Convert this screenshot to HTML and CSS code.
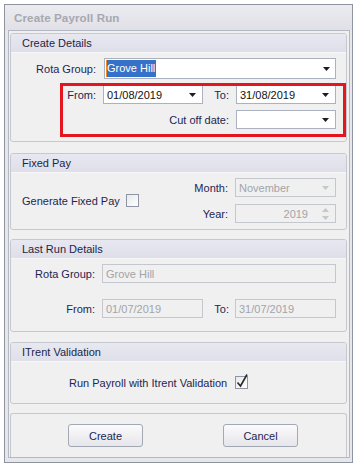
FILE: index.html
```html
<!DOCTYPE html>
<html>
<head>
<meta charset="utf-8">
<link rel="stylesheet" href="styles.css">
</head>
<body>
<div class="window">
  <div class="titlebar"><span class="title">Create Payroll Run</span></div>
  <div class="client">
    <section class="group g1">
      <div class="ghead">Create Details</div>
      <div class="gbody b1">
        <div class="row">
          <span class="lbl l93">Rota Group:</span>
          <div class="combo w232 h21"><span class="val"><span class="sel">Grove Hill</span></span><svg class="arrow" width="7" height="4" viewBox="0 0 7 4"><path d="M0 0h7L3.5 4z"/></svg></div>
        </div>
        <div class="row gap6">
          <span class="lbl l92">From:</span>
          <div class="combo w100"><span class="val">01/08/2019</span><svg class="arrow" width="7" height="4" viewBox="0 0 7 4"><path d="M0 0h7L3.5 4z"/></svg></div>
          <span class="lbl l33">To:</span>
          <div class="combo w100"><span class="val">31/08/2019</span><svg class="arrow" width="7" height="4" viewBox="0 0 7 4"><path d="M0 0h7L3.5 4z"/></svg></div>
        </div>
        <div class="row gap6 end">
          <span class="lbl pr7">Cut off date:</span>
          <div class="combo w100"><span class="val"></span><svg class="arrow" width="7" height="4" viewBox="0 0 7 4"><path d="M0 0h7L3.5 4z"/></svg></div>
        </div>
      </div>
      <div class="annot"></div>
    </section>

    <section class="group g2">
      <div class="ghead">Fixed Pay</div>
      <div class="gbody b2">
        <div class="gen">
          <span class="lbl">Generate Fixed Pay</span>
          <span class="check"></span>
        </div>
        <div class="rcol">
          <div class="row">
            <span class="lbl pr7">Month:</span>
            <div class="combo w101 dis"><span class="val">November</span><svg class="arrow" width="7" height="4" viewBox="0 0 7 4"><path d="M0 0h7L3.5 4z"/></svg></div>
          </div>
          <div class="row">
            <span class="lbl pr7">Year:</span>
            <div class="combo w101 dis"><span class="val right">2019</span>
              <span class="spin">
                <svg width="7" height="4" viewBox="0 0 7 4"><path d="M0 4h7L3.5 0z"/></svg>
                <svg width="7" height="4" viewBox="0 0 7 4"><path d="M0 0h7L3.5 4z"/></svg>
              </span>
            </div>
          </div>
        </div>
      </div>
    </section>

    <section class="group g3">
      <div class="ghead">Last Run Details</div>
      <div class="gbody b3">
        <div class="row">
          <span class="lbl l91">Rota Group:</span>
          <div class="combo w234 dis"><span class="val">Grove Hill</span></div>
        </div>
        <div class="row gap16">
          <span class="lbl l91">From:</span>
          <div class="combo w101 dis"><span class="val">01/07/2019</span></div>
          <span class="lbl l32">To:</span>
          <div class="combo w101 dis"><span class="val">31/07/2019</span></div>
        </div>
      </div>
    </section>

    <section class="group g4">
      <div class="ghead">ITrent Validation</div>
      <div class="gbody b4">
        <span class="lbl">Run Payroll with Itrent Validation</span>
        <span class="check on"><svg width="14" height="16" viewBox="0 0 14 16"><path d="M2.5 9.5L5.5 13L12 1.5" fill="none" stroke="#2a2a2a" stroke-width="1.6"/></svg></span>
      </div>
    </section>

    <div class="panel">
      <button class="btn">Create</button>
      <button class="btn">Cancel</button>
    </div>
  </div>
</div>
</body>
</html>
```

FILE: styles.css
```css
html, body {
  margin: 0;
  padding: 0;
  background: #ffffff;
}
body {
  font-family: "Liberation Sans", Arial, sans-serif;
  font-size: 11px;
  color: #1e2550;
}
.window {
  margin: 4px 0 0 4px;
  width: 349px;
  height: 459px;
  box-sizing: border-box;
  border: 1px solid #8e939e;
  background: #e6e6eb;
  padding: 0 2px 4px 3px;
  display: flex;
  flex-direction: column;
}
.titlebar {
  height: 25px;
  display: flex;
  align-items: center;
  background: linear-gradient(#ebebf0, #e0e0e6);
  margin: 0 -2px 0 -3px;
  padding-left: 9px;
}
.title {
  font-weight: bold;
  font-size: 11.6px;
  color: #a6a8b0;
  letter-spacing: 0.1px;
}
.client {
  flex: 1;
  border: 1px solid #b4b8c2;
  background: #f0f0f0;
  padding: 2px 2px 0 1px;
  display: flex;
  flex-direction: column;
}
.group {
  position: relative;
  width: 337px;
  box-sizing: border-box;
  border: 1px solid #c6c8d0;
  border-radius: 3px;
  background: #f0f0f0;
}
.g2 { margin-top: 11px; }
.g3 { margin-top: 9px; }
.g4 { margin-top: 10px; }
.ghead {
  height: 19px;
  box-sizing: border-box;
  padding-left: 11px;
  display: flex;
  align-items: center;
  background: linear-gradient(#e8e8f1, #dfdfe9);
  border-bottom: 1px solid #f7f7fa;
  border-radius: 2px 2px 0 0;
  color: #1b2548;
}
.gbody {
  padding-right: 10px;
}
.b1 { padding-top: 5px; padding-bottom: 12px; display: flex; flex-direction: column; gap: 6px; }
.b2 { padding: 5px 10px 6px 11px; display: flex; align-items: center; }
.b3 { padding-top: 5px; padding-bottom: 13px; display: flex; flex-direction: column; }
.b4 { padding: 14px 0 14px 58px; display: flex; align-items: center; height: 13px; }
.row {
  display: flex;
  align-items: center;
}
.gap16 { margin-top: 16px; }
.end { justify-content: flex-end; }
.lbl {
  box-sizing: border-box;
  text-align: right;
  white-space: nowrap;
}
.l93 { width: 93px; padding-right: 8px; }
.l92 { width: 92px; padding-right: 7px; }
.l91 { width: 91px; padding-right: 7px; }
.l33 { width: 33px; padding-right: 7px; }
.l32 { width: 32px; padding-right: 6px; }
.pr7 { padding-right: 7px; }
.combo {
  box-sizing: border-box;
  height: 19px;
  border: 1px solid #abb1be;
  background: #ffffff;
  display: flex;
  align-items: center;
  padding-left: 3px;
  color: #111111;
}
.h21 { height: 21px; padding-left: 1px; }
.w232 { width: 232px; }
.w234 { width: 234px; }
.w100 { width: 100px; }
.w101 { width: 101px; }
.val {
  flex: 1;
  white-space: nowrap;
}
.val.right { text-align: right; padding-right: 14px; }
.sel {
  display: inline-block;
  background: #3671c9;
  color: #ffffff;
  border-left: 1px solid #f08a24;
  padding: 1px 1px 1px 0;
  line-height: 15px;
}
.arrow {
  margin-right: 6px;
  fill: #1c1c24;
  flex: none;
}
.h21 .arrow { margin-right: 5px; }
.combo.dis {
  border-color: #c4c7ce;
  background: #f0f0f0;
  color: #a2a4aa;
}
.combo.dis .arrow { fill: #c6c7cc; }
.spin {
  display: flex;
  flex-direction: column;
  gap: 4px;
  margin-right: 6px;
  fill: #c6c7cc;
}
.spin svg { display: block; }
.gen {
  display: flex;
  align-items: center;
}
.check {
  width: 13px;
  height: 13px;
  box-sizing: border-box;
  border: 1px solid #8f95a2;
  background: linear-gradient(135deg, #e8e9ee, #ffffff);
  margin-left: 6px;
  position: relative;
  flex: none;
}
.check.on { margin-left: 8px; }
.check.on svg {
  position: absolute;
  left: -1px;
  top: -4px;
}
.rcol {
  margin-left: auto;
  display: flex;
  flex-direction: column;
  align-items: flex-end;
  gap: 7px;
}
.annot {
  position: absolute;
  left: 49px;
  top: 49px;
  width: 286px;
  height: 54px;
  box-sizing: border-box;
  border: 3px solid #e3161f;
  pointer-events: none;
}
.panel {
  margin-top: 9px;
  width: 337px;
  height: 44px;
  box-sizing: border-box;
  border: 1px solid #c6c8d0;
  border-bottom: none;
  border-radius: 3px 3px 0 0;
  padding: 10px 0 0 57px;
  display: flex;
  gap: 80px;
  align-items: flex-start;
}
.btn {
  width: 75px;
  height: 23px;
  box-sizing: border-box;
  border: 1px solid #a3a8b5;
  border-radius: 3px;
  background: linear-gradient(#fbfbfc, #e6e6eb);
  font-family: "Liberation Sans", Arial, sans-serif;
  font-size: 11px;
  color: #1e2550;
  padding: 0;
}
```
